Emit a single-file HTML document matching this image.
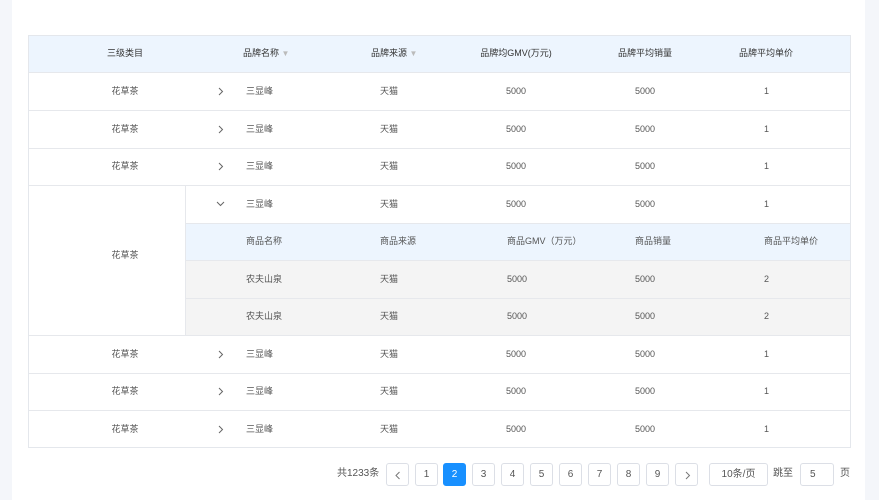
<!DOCTYPE html>
<html><head><meta charset="utf-8"><style>
*{margin:0;padding:0;box-sizing:border-box}
body{width:879px;height:500px;background:#f4f6fa;font-family:"Liberation Sans","Noto Sans CJK SC",sans-serif;font-size:9px;color:#555;position:relative;overflow:hidden}
.card{position:absolute;left:12px;top:0;width:853px;height:500px;background:#fff}
.a{position:absolute;white-space:nowrap;line-height:12px;height:12px}
.tb{position:absolute;left:28px;top:35px;width:823px;height:413px;border:1px solid #e4e7ec;background:#fff}
.hl{position:absolute;height:1px;background:#e6e8ec}
.c{transform:translateX(-50%)}
.pg{position:absolute;top:463px;width:23px;height:23px;border:1px solid #dcdfe6;border-radius:3px;background:#fff;text-align:center;line-height:21px;font-size:10px;color:#555}
.on{background:#1890ff;border-color:#1890ff;color:#fff}
.h{color:#333}
svg{position:absolute}
</style></head><body>
<div class="card"></div>
<div class="tb"></div>
<div style="position:absolute;left:29px;top:36px;width:821px;height:36px;background:#edf5fe"></div>
<div style="position:absolute;left:186px;top:223px;width:664px;height:37px;background:#edf5fe"></div>
<div style="position:absolute;left:186px;top:261px;width:664px;height:74px;background:#f4f4f4"></div>
<div class="hl" style="left:29px;top:72px;width:821px"></div>
<div class="hl" style="left:29px;top:110px;width:821px"></div>
<div class="hl" style="left:29px;top:148px;width:821px"></div>
<div class="hl" style="left:29px;top:185px;width:821px"></div>
<div class="hl" style="left:186px;top:223px;width:664px"></div>
<div class="hl" style="left:186px;top:260px;width:664px"></div>
<div class="hl" style="left:186px;top:298px;width:664px"></div>
<div class="hl" style="left:29px;top:335px;width:821px"></div>
<div class="hl" style="left:29px;top:373px;width:821px"></div>
<div class="hl" style="left:29px;top:410px;width:821px"></div>
<div style="position:absolute;left:185px;top:186px;width:1px;height:149px;background:#e6e8ec"></div>

<div class="a c h" style="left:125px;top:47px">三级类目</div>
<div class="a h" style="left:243px;top:47px">品牌名称 <span style="color:#bbb;font-size:8px">▼</span></div>
<div class="a h" style="left:371px;top:47px">品牌来源 <span style="color:#bbb;font-size:8px">▼</span></div>
<div class="a c h" style="left:516px;top:47px">品牌均GMV(万元)</div>
<div class="a c h" style="left:645px;top:47px">品牌平均销量</div>
<div class="a c h" style="left:766px;top:47px">品牌平均单价</div>

<!-- rows -->
<div class="a c" style="left:125px;top:85px">花草茶</div><svg style="left:218px;top:87px" width="6" height="9"><path d="M1 1 L4.5 4.5 L1 8" fill="none" stroke="#666"/></svg><div class="a" style="left:246px;top:85px">三显峰</div><div class="a c" style="left:389px;top:85px">天猫</div><div class="a c" style="left:516px;top:85px">5000</div><div class="a c" style="left:645px;top:85px">5000</div><div class="a" style="left:764px;top:85px">1</div>
<div class="a c" style="left:125px;top:123px">花草茶</div><svg style="left:218px;top:125px" width="6" height="9"><path d="M1 1 L4.5 4.5 L1 8" fill="none" stroke="#666"/></svg><div class="a" style="left:246px;top:123px">三显峰</div><div class="a c" style="left:389px;top:123px">天猫</div><div class="a c" style="left:516px;top:123px">5000</div><div class="a c" style="left:645px;top:123px">5000</div><div class="a" style="left:764px;top:123px">1</div>
<div class="a c" style="left:125px;top:160px">花草茶</div><svg style="left:218px;top:162px" width="6" height="9"><path d="M1 1 L4.5 4.5 L1 8" fill="none" stroke="#666"/></svg><div class="a" style="left:246px;top:160px">三显峰</div><div class="a c" style="left:389px;top:160px">天猫</div><div class="a c" style="left:516px;top:160px">5000</div><div class="a c" style="left:645px;top:160px">5000</div><div class="a" style="left:764px;top:160px">1</div>
<div class="a c" style="left:125px;top:249px">花草茶</div>
<svg style="left:216px;top:201px" width="9" height="6"><path d="M1 1 L4.5 4.5 L8 1" fill="none" stroke="#666"/></svg>
<div class="a" style="left:246px;top:198px">三显峰</div><div class="a c" style="left:389px;top:198px">天猫</div><div class="a c" style="left:516px;top:198px">5000</div><div class="a c" style="left:645px;top:198px">5000</div><div class="a" style="left:764px;top:198px">1</div>
<div class="a" style="left:246px;top:235px">商品名称</div><div class="a" style="left:380px;top:235px">商品来源</div><div class="a" style="left:507px;top:235px">商品GMV（万元）</div><div class="a" style="left:635px;top:235px">商品销量</div><div class="a" style="left:764px;top:235px">商品平均单价</div>
<div class="a" style="left:246px;top:273px">农夫山泉</div><div class="a" style="left:380px;top:273px">天猫</div><div class="a" style="left:507px;top:273px">5000</div><div class="a" style="left:635px;top:273px">5000</div><div class="a" style="left:764px;top:273px">2</div>
<div class="a" style="left:246px;top:310px">农夫山泉</div><div class="a" style="left:380px;top:310px">天猫</div><div class="a" style="left:507px;top:310px">5000</div><div class="a" style="left:635px;top:310px">5000</div><div class="a" style="left:764px;top:310px">2</div>
<div class="a c" style="left:125px;top:348px">花草茶</div><svg style="left:218px;top:350px" width="6" height="9"><path d="M1 1 L4.5 4.5 L1 8" fill="none" stroke="#666"/></svg><div class="a" style="left:246px;top:348px">三显峰</div><div class="a c" style="left:389px;top:348px">天猫</div><div class="a c" style="left:516px;top:348px">5000</div><div class="a c" style="left:645px;top:348px">5000</div><div class="a" style="left:764px;top:348px">1</div>
<div class="a c" style="left:125px;top:385px">花草茶</div><svg style="left:218px;top:387px" width="6" height="9"><path d="M1 1 L4.5 4.5 L1 8" fill="none" stroke="#666"/></svg><div class="a" style="left:246px;top:385px">三显峰</div><div class="a c" style="left:389px;top:385px">天猫</div><div class="a c" style="left:516px;top:385px">5000</div><div class="a c" style="left:645px;top:385px">5000</div><div class="a" style="left:764px;top:385px">1</div>
<div class="a c" style="left:125px;top:423px">花草茶</div><svg style="left:218px;top:425px" width="6" height="9"><path d="M1 1 L4.5 4.5 L1 8" fill="none" stroke="#666"/></svg><div class="a" style="left:246px;top:423px">三显峰</div><div class="a c" style="left:389px;top:423px">天猫</div><div class="a c" style="left:516px;top:423px">5000</div><div class="a c" style="left:645px;top:423px">5000</div><div class="a" style="left:764px;top:423px">1</div>

<!-- pagination -->
<div class="a" style="left:337px;top:468px;font-size:10px">共1233条</div>
<div class="pg" style="left:386px"><svg style="left:8px;top:7px" width="6" height="9"><path d="M4.5 1 L1 4.5 L4.5 8" fill="none" stroke="#777"/></svg></div>
<div class="pg" style="left:415px">1</div>
<div class="pg on" style="left:443px">2</div>
<div class="pg" style="left:472px">3</div>
<div class="pg" style="left:501px">4</div>
<div class="pg" style="left:530px">5</div>
<div class="pg" style="left:559px">6</div>
<div class="pg" style="left:588px">7</div>
<div class="pg" style="left:617px">8</div>
<div class="pg" style="left:646px">9</div>
<div class="pg" style="left:675px"><svg style="left:9px;top:7px" width="6" height="9"><path d="M1 1 L4.5 4.5 L1 8" fill="none" stroke="#777"/></svg></div>
<div class="pg" style="left:709px;width:59px">10条/页</div>
<div class="a" style="left:773px;top:468px;font-size:10px">跳至</div>
<div class="pg" style="left:800px;width:34px;text-align:left;padding-left:9px">5</div>
<div class="a" style="left:840px;top:468px;font-size:10px">页</div>
</body></html>
